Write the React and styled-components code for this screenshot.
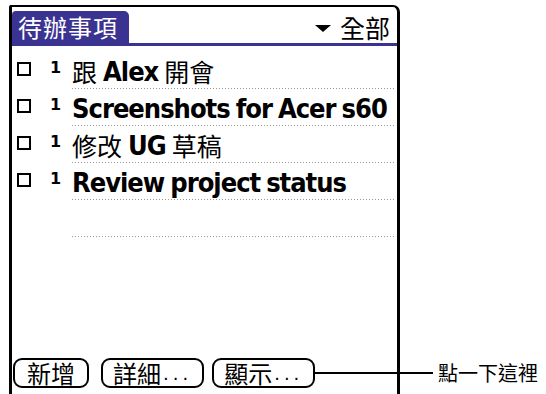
import React from 'react';
import styled, { createGlobalStyle } from 'styled-components';

const GlobalStyle = createGlobalStyle`
  html, body {
    margin: 0;
    padding: 0;
    background: #fff;
  }
  body {
    font-family: "Noto Sans CJK TC", "Liberation Sans", sans-serif;
    color: #000;
  }
`;

const PALM_BLUE = '#3b3391';
const CJK = '"Noto Sans CJK TC", "Noto Sans CJK SC", sans-serif';
const LATIN = '"DejaVu Sans", "Liberation Sans", sans-serif';

const Page = styled.div`
  position: relative;
  width: 546px;
  height: 394px;
  overflow: hidden;
  padding: 5px 0 0 9px;
  box-sizing: border-box;
`;

const Device = styled.div`
  width: 391px;
  height: 389px;
  box-sizing: border-box;
  border: 2px solid #000;
  border-left-width: 3px;
  border-right-width: 3px;
  border-bottom: none;
  border-top-right-radius: 7px;
  border-top-left-radius: 2px;
  display: flex;
  flex-direction: column;
`;

const TitleBar = styled.div`
  display: flex;
  align-items: flex-end;
  justify-content: space-between;
  height: 35px;
  padding-top: 1px;
  border-bottom: 3px solid ${PALM_BLUE};
  box-sizing: content-box;
`;

const Tab = styled.div`
  width: 117px;
  height: 32px;
  box-sizing: border-box;
  padding-left: 6px;
  background: ${PALM_BLUE};
  border-radius: 4px 5px 0 0;
  color: #fff;
  font-family: ${CJK};
  font-size: 24px;
  line-height: 32px;
  letter-spacing: 1px;
`;

const Filter = styled.div`
  display: flex;
  align-items: center;
  gap: 9px;
  height: 32px;
  padding-right: 7px;
  font-family: ${CJK};
  font-size: 25px;
  line-height: 32px;
`;

const Triangle = styled.span`
  width: 0;
  height: 0;
  border-left: 8px solid transparent;
  border-right: 8px solid transparent;
  border-top: 7px solid #000;
  margin-top: 2px;
`;

const List = styled.div`
  display: flex;
  flex-direction: column;
  padding-top: 6px;
`;

const Row = styled.div`
  display: flex;
  align-items: center;
  height: 37px;
  padding-left: 5px;
`;

const Check = styled.span`
  flex-shrink: 0;
  width: 14px;
  height: 14px;
  box-sizing: border-box;
  border: 2px solid #000;
  margin-top: -3px;
  visibility: ${(p) => (p.$empty ? 'hidden' : 'visible')};
`;

const Priority = styled.span`
  flex-shrink: 0;
  width: 9px;
  margin-left: 19px;
  margin-top: -6px;
  font-family: ${LATIN};
  font-weight: bold;
  font-size: 16px;
  visibility: ${(p) => (p.$empty ? 'hidden' : 'visible')};
`;

const Desc = styled.div`
  flex: 1;
  min-width: 0;
  height: 100%;
  margin-left: 13px;
  margin-right: 1px;
  display: flex;
  align-items: center;
  gap: 6px;
  padding-top: 1px;
  box-sizing: border-box;
  background-image: linear-gradient(to right, #999 1px, transparent 1px);
  background-size: 3px 1px;
  background-repeat: repeat-x;
  background-position: left bottom;
  white-space: nowrap;
`;

const Latin = styled.span`
  font-family: ${LATIN};
  font-stretch: condensed;
  font-weight: bold;
  font-size: 27px;
  letter-spacing: -1px;
`;

const Han = styled.span`
  font-family: ${CJK};
  font-size: 25px;
`;

const Spacer = styled.div`
  flex: 1;
`;

const ButtonBar = styled.div`
  display: flex;
  align-items: center;
  padding: 0 0 6px 1px;
`;

const Button = styled.button`
  height: 30px;
  margin-right: ${(p) => p.$gap}px;
  padding: 0 ${(p) => p.$pad}px;
  background: #fff;
  border: 2px solid #000;
  border-radius: 9px;
  font-family: ${CJK};
  font-size: 24px;
  line-height: 26px;
  color: #000;
  display: flex;
  align-items: center;
`;

const Dots = styled.span`
  font-family: ${LATIN};
  font-size: 18px;
  letter-spacing: 4px;
  margin-left: 2px;
  align-self: flex-end;
  line-height: 24px;
`;

const Callout = styled.div`
  position: absolute;
  left: 315px;
  top: 361px;
  height: 24px;
  display: flex;
  align-items: center;
`;

const Leader = styled.span`
  width: 118px;
  height: 2px;
  background: #000;
`;

const CalloutText = styled.span`
  margin-left: 5px;
  font-family: ${CJK};
  font-size: 20px;
  line-height: 24px;
`;

const tasks = ['跟 Alex 開會', 'Screenshots for Acer s60', '修改 UG 草稿', 'Review project status', ''];

function TaskText({ text }) {
  return text
    .split(' ')
    .filter(Boolean)
    .map((part, i) =>
      /[\u3400-\u9fff]/.test(part) ? <Han key={i}>{part}</Han> : <Latin key={i}>{part}</Latin>
    );
}

function TaskRow({ text }) {
  const empty = !text;
  return (
    <Row>
      <Check $empty={empty} />
      <Priority $empty={empty}>1</Priority>
      <Desc>
        <TaskText text={text} />
      </Desc>
    </Row>
  );
}

export default function App() {
  return (
    <>
      <GlobalStyle />
      <Page>
        <Device>
          <TitleBar>
            <Tab>待辦事項</Tab>
            <Filter>
              <Triangle />
              全部
            </Filter>
          </TitleBar>
          <List>
            {tasks.map((t, i) => (
              <TaskRow key={i} text={t} />
            ))}
          </List>
          <Spacer />
          <ButtonBar>
            <Button $pad={12} $gap={12}>新增</Button>
            <Button $pad={10} $gap={8}>
              詳細<Dots>...</Dots>
            </Button>
            <Button $pad={10} $gap={0}>
              顯示<Dots>...</Dots>
            </Button>
          </ButtonBar>
        </Device>
        <Callout>
          <Leader />
          <CalloutText>點一下這裡</CalloutText>
        </Callout>
      </Page>
    </>
  );
}
